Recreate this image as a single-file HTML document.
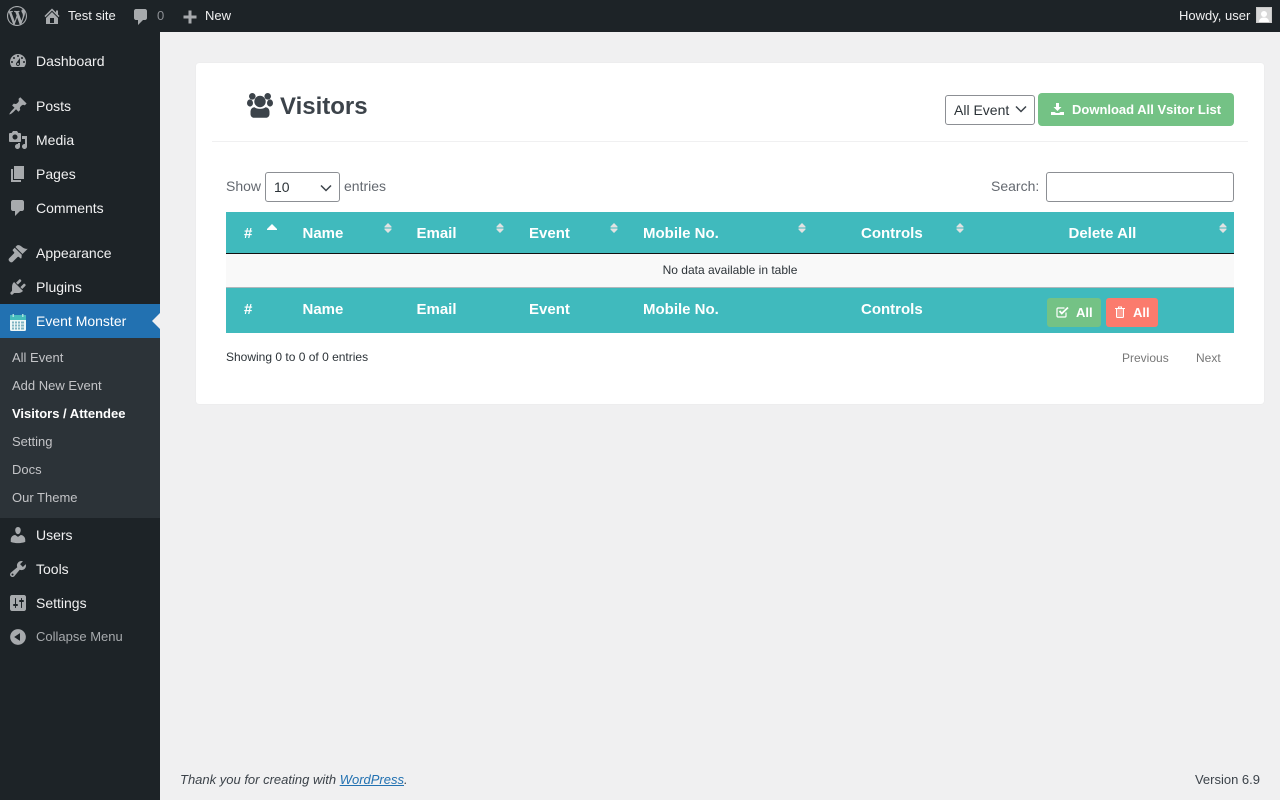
<!DOCTYPE html>
<html lang="en"><head><meta charset="utf-8"><title>Visitors</title>
<style>
html,body{margin:0;padding:0;width:1280px;height:800px;overflow:hidden;background:#f0f0f1;font-family:"Liberation Sans",sans-serif;font-size:13px;color:#3c434a}
div,span,svg,a{position:absolute;white-space:nowrap}
.t{line-height:20px;height:20px}
.m{left:36px;font-size:14px;color:#f0f0f1}
.s{left:12px;font-size:13px;color:#c3c4c7}
.i{width:20px;height:20px;fill:#a7aaad}
.h{font-weight:bold;font-size:15px;color:#fff}
.sort{width:8px;height:10px;fill:#e2e2e2}
.bar{font-size:13px;color:#f0f0f1}
</style></head><body>

<div style="left:0;top:0;width:1280px;height:32px;background:#1d2327"></div>
<div style="left:0;top:32px;width:160px;height:768px;background:#1d2327"></div>

<svg class="i" style="left:7px;top:6px" viewBox="0 0 20 20"><path d="M20 10c0-5.51-4.49-10-10-10C4.48 0 0 4.49 0 10c0 5.52 4.48 10 10 10 5.51 0 10-4.48 10-10zM7.78 15.37L4.37 6.22c.55-.02 1.17-.08 1.17-.08.5-.06.44-1.13-.06-1.11 0 0-1.45.11-2.37.11-.18 0-.37 0-.58-.01C4.12 2.69 6.87 1.11 10 1.11c2.33 0 4.45.87 6.05 2.34-.68-.11-1.65.39-1.65 1.58 0 .74.45 1.36.9 2.1.35.61.55 1.36.55 2.46 0 1.49-1.4 5-1.4 5l-3.03-8.37c.54-.02.82-.17.82-.17.5-.05.44-1.25-.06-1.22 0 0-1.44.12-2.38.12-.87 0-2.33-.12-2.33-.12-.5-.03-.56 1.2-.06 1.22l.92.08 1.26 3.41zM17.41 10c.24-.64.74-1.87.43-4.25.7 1.29 1.05 2.71 1.05 4.25 0 3.29-1.73 6.24-4.4 7.78.97-2.59 1.94-5.2 2.92-7.78zM6.1 18.09C3.12 16.65 1.11 13.53 1.11 10c0-1.3.23-2.48.72-3.59C3.25 10.3 4.67 14.2 6.1 18.09zm4.03-6.63l2.58 6.98c-.86.29-1.76.45-2.71.45-.79 0-1.57-.11-2.29-.33.81-2.38 1.62-4.74 2.42-7.1z"/></svg>
<svg class="i" style="left:42px;top:6px" viewBox="0 0 20 20"><path d="M16 8.5l1.53 1.53-1.06 1.06L10 4.62l-6.47 6.47-1.06-1.06L10 2.5l4 4v-2h2v4zm-6-2.46l6 5.99V18H4v-5.97zM12 17v-5H8v5h4z"/></svg>
<div class="t bar" style="left:68px;top:6px">Test site</div>
<svg class="i" style="left:131px;top:7px" viewBox="0 0 20 20"><path d="M5 2h9c1.1 0 2 .9 2 2v7c0 1.1-.9 2-2 2h-2l-5 5v-5H5c-1.1 0-2-.9-2-2V4c0-1.1.9-2 2-2z"/></svg>
<div class="t" style="left:157px;top:6px;font-size:13px;color:#8c8f94">0</div>
<svg class="i" style="left:179.500px;top:6.500px" viewBox="0 0 20 20"><path d="M16.500 8.500v3h-5v5h-3v-5h-5v-3h5v-5h3v5z"/></svg>
<div class="t bar" style="left:205px;top:6px">New</div>
<div class="t bar" style="left:1179px;top:6px">Howdy, user</div>
<svg style="left:1256px;top:7px;width:16px;height:16px" viewBox="0 0 16 16"><rect width="16" height="16" fill="#c8c8c8"/><rect x="1" y="1" width="14" height="14" fill="#d8d8d8"/><circle cx="8" cy="7" r="3" fill="#fff"/><path d="M3 15c0-3 2.200-4.500 5-4.500s5 1.500 5 4.500z" fill="#fff"/></svg>

<svg class="i" style="left:8px;top:51px" viewBox="0 0 20 20"><path fill-rule="evenodd" d="M3.760 16h12.480c1.100-1.370 1.760-3.110 1.760-5 0-4.420-3.580-8-8-8s-8 3.580-8 8c0 1.890.660 3.630 1.760 5zM10 4c.55 0 1 .45 1 1s-.45 1-1 1-1-.45-1-1 .45-1 1-1zM6 6c.55 0 1 .45 1 1s-.45 1-1 1-1-.45-1-1 .45-1 1-1zm8 0c.55 0 1 .45 1 1s-.45 1-1 1-1-.45-1-1 .45-1 1-1zm-5.370 5.550L12 7v6c0 1.100-.9 2-2 2s-2-.9-2-2c0-.57.24-1.080.63-1.450zM4 10c.55 0 1 .45 1 1s-.45 1-1 1-1-.45-1-1 .45-1 1-1zm12 0c.55 0 1 .45 1 1s-.45 1-1 1-1-.45-1-1 .45-1 1-1zm-5 3c0-.55-.45-1-1-1s-1 .45-1 1 .45 1 1 1 1-.45 1-1z"/></svg>
<div class="t m" style="top:51px">Dashboard</div>

<svg class="i" style="left:8px;top:96px" viewBox="0 0 20 20"><path d="M10.440 3.020l1.820-1.820 6.360 6.350-1.830 1.820c-1.050-.68-2.480-.57-3.410.36l-.75.75c-.92.93-1.040 2.350-.35 3.410l-1.830 1.820-2.410-2.410-2.800 2.790c-.42.42-3.380 2.710-3.800 2.290s1.860-3.390 2.280-3.810l2.790-2.790L4.100 9.360l1.830-1.820c1.050.69 2.480.57 3.400-.36l.75-.75c.93-.92 1.050-2.350.36-3.410z"/></svg>
<div class="t m" style="top:96px">Posts</div>

<svg class="i" style="left:8px;top:130px" viewBox="0 0 20 20"><path fill-rule="evenodd" d="M13 11V4c0-.55-.45-1-1-1h-1.670L9 1H5L3.670 3H2c-.55 0-1 .45-1 1v7c0 .55.45 1 1 1h10c.55 0 1-.45 1-1zM7 4.500c1.380 0 2.500 1.120 2.500 2.500S8.380 9.500 7 9.500 4.500 8.380 4.500 7 5.620 4.500 7 4.500zM14 6h5v10.500c0 1.380-1.120 2.500-2.500 2.500S14 17.880 14 16.500s1.120-2.500 2.500-2.500c.17 0 .34.02.5.05V9h-3V6zm-4 8.050V13h2v3.500c0 1.380-1.120 2.500-2.500 2.500S7 17.880 7 16.500 8.120 14 9.500 14c.17 0 .34.02.5.05z"/></svg>
<div class="t m" style="top:130px">Media</div>

<svg class="i" style="left:8px;top:164px" viewBox="0 0 20 20"><path d="M6 15V2h10v13H6zm-1 1h8v2H3V5h2v11z"/></svg>
<div class="t m" style="top:164px">Pages</div>

<svg class="i" style="left:8px;top:198px" viewBox="0 0 20 20"><path d="M5 2h9c1.100 0 2 .9 2 2v7c0 1.100-.9 2-2 2h-2l-5 5v-5H5c-1.100 0-2-.9-2-2V4c0-1.100.9-2 2-2z"/></svg>
<div class="t m" style="top:198px">Comments</div>

<svg class="i" style="left:8px;top:243px" viewBox="0 0 20 20"><path d="M14.480 11.060L7.410 3.990l1.500-1.500c.5-.56 2.300-.47 3.510.32 1.210.8 1.430 1.280 2.910 2.100 1.180.64 2.450 1.260 4.450.85zm-.71.71L6.700 4.700 4.930 6.470c-.39.39-.39 1.020 0 1.410l1.060 1.060c.39.39.39 1.030 0 1.420L1.200 15.200c-.8.8-.8 2.100 0 2.900l.7.700c.8.8 2.100.8 2.900 0l4.800-4.790c.39-.39 1.030-.39 1.420 0l1.060 1.060c.39.39 1.020.39 1.410 0z"/></svg>
<div class="t m" style="top:243px">Appearance</div>

<svg class="i" style="left:8px;top:277px" viewBox="0 0 20 20"><path d="M13.110 4.360L9.870 7.600 8 5.730l3.240-3.240c.35-.34 1.050-.2 1.560.32.52.51.66 1.210.31 1.550zm-8 1.770l.91-1.120 9.010 9.010-1.190.84c-.71.71-2.630 1.160-3.820 1.160H6.140L4.900 17.260c-.59.59-1.540.59-2.120 0-.59-.58-.59-1.530 0-2.120l1.240-1.240v-3.880c0-1.130.4-3.190 1.090-3.890zm7.260 3.970l3.240-3.240c.34-.35 1.040-.21 1.550.31.52.51.66 1.210.31 1.550l-3.240 3.250z"/></svg>
<div class="t m" style="top:277px">Plugins</div>

<div style="left:0;top:304px;width:160px;height:34px;background:#2271b1"></div>
<svg style="left:152px;top:313px;width:8px;height:16px" viewBox="0 0 8 16"><path d="M8 0v16L0 8z" fill="#f0f0f1"/></svg>
<svg style="left:10px;top:314px;width:16px;height:17px" viewBox="0 0 16 17"><rect x="0" y="1" width="16" height="16" rx="1.500" fill="#eef7f7"/><path d="M0 2.500A1.500 1.500 0 0 1 1.500 1h13A1.500 1.500 0 0 1 16 2.500V6H0z" fill="#45bdbd"/><rect x="2.500" y="0" width="1.500" height="3" fill="#a9e0e0"/><rect x="12" y="0" width="1.500" height="3" fill="#a9e0e0"/><g fill="#7fb3c2"><rect x="2" y="7.500" width="2" height="2"/><rect x="5" y="7.500" width="2" height="2"/><rect x="8" y="7.500" width="2" height="2"/><rect x="11" y="7.500" width="3" height="2"/><rect x="2" y="10.500" width="2" height="2"/><rect x="5" y="10.500" width="2" height="2"/><rect x="8" y="10.500" width="2" height="2"/><rect x="11" y="10.500" width="3" height="2"/><rect x="2" y="13.500" width="2" height="2"/><rect x="5" y="13.500" width="2" height="2"/><rect x="8" y="13.500" width="2" height="2"/><rect x="11" y="13.500" width="3" height="2"/></g></svg>
<div class="t m" style="top:311px;color:#fff">Event Monster</div>

<div style="left:0;top:338px;width:160px;height:180px;background:#2c3338"></div>
<div class="t s" style="top:348px">All Event</div>
<div class="t s" style="top:376px">Add New Event</div>
<div class="t s" style="top:404px;color:#fff;font-weight:bold">Visitors / Attendee</div>
<div class="t s" style="top:432px">Setting</div>
<div class="t s" style="top:460px">Docs</div>
<div class="t s" style="top:488px">Our Theme</div>

<svg class="i" style="left:8px;top:525px" viewBox="0 0 20 20"><path d="M10 9.250c-2.270 0-2.730-3.440-2.730-3.440C7 4.020 7.820 2 9.970 2c2.160 0 2.980 2.020 2.710 3.810 0 0-.41 3.440-2.680 3.440zm0 2.570L12.720 10c2.390 0 4.520 2.330 4.520 4.530v2.490s-3.650 1.130-7.240 1.130c-3.650 0-7.240-1.130-7.240-1.130v-2.490c0-2.250 1.940-4.480 4.470-4.480z"/></svg>
<div class="t m" style="top:525px">Users</div>

<svg class="i" style="left:8px;top:559px" viewBox="0 0 20 20"><path fill-rule="evenodd" d="M16.680 9.770c-1.340 1.340-3.300 1.670-4.950.99l-5.410 6.520c-.99.99-2.590.99-3.580 0s-.99-2.590 0-3.570l6.520-5.420c-.68-1.650-.35-3.610.99-4.950 1.280-1.280 3.120-1.620 4.720-1.060l-2.890 2.890 2.820 2.820 2.860-2.870c.53 1.580.18 3.390-1.080 4.650zM3.810 16.210c.4.39 1.040.39 1.430 0 .4-.4.4-1.040 0-1.430-.39-.4-1.030-.4-1.430 0-.39.39-.39 1.030 0 1.430z"/></svg>
<div class="t m" style="top:559px">Tools</div>

<svg class="i" style="left:8px;top:593px" viewBox="0 0 20 20"><path fill-rule="evenodd" d="M18 16V4c0-1.100-.9-2-2-2H4c-1.100 0-2 .9-2 2v12c0 1.100.9 2 2 2h12c1.100 0 2-.9 2-2zM8 11h1c.55 0 1 .45 1 1s-.45 1-1 1H8v1.500c0 .28-.22.5-.5.5s-.5-.22-.5-.5V13H6c-.55 0-1-.45-1-1s.45-1 1-1h1V5.500c0-.28.22-.5.5-.5s.5.22.5.5V11zm5-2h-1c-.55 0-1-.45-1-1s.45-1 1-1h1V5.500c0-.28.22-.5.5-.5s.5.22.5.5V7h1c.55 0 1 .45 1 1s-.45 1-1 1h-1v5.500c0 .28-.22.5-.5.5s-.5-.22-.5-.5V9z"/></svg>
<div class="t m" style="top:593px">Settings</div>

<svg class="i" style="left:8px;top:627px" viewBox="0 0 20 20"><path fill-rule="evenodd" d="M10 2.160c4.330 0 7.840 3.510 7.840 7.840s-3.510 7.840-7.840 7.840S2.160 14.330 2.160 10 5.710 2.160 10 2.160zm2 11.720V6.120L6.180 9.970z"/></svg>
<div class="t" style="left:36px;top:627px;font-size:13px;color:#a7aaad">Collapse Menu</div>

<div style="left:196px;top:63px;width:1068px;height:341px;background:#fff;border-radius:3px;box-shadow:0 0 1px rgba(0,0,0,.08)"></div>

<svg style="left:247px;top:93px;width:26px;height:25px" viewBox="0 0 26 25" fill="#3c434a"><circle cx="5.300" cy="3.300" r="3.300"/><circle cx="20.700" cy="3.300" r="3.300"/><circle cx="13" cy="8.500" r="5.700"/><ellipse cx="3" cy="10" rx="3" ry="3.600"/><ellipse cx="23" cy="10" rx="3" ry="3.600"/><path d="M3.500 19c0-3.200 2.200-4.700 4-4.700 1.400 1.100 3.400 1.600 5.500 1.600s4.100-.5 5.500-1.600c1.800 0 4 1.500 4 4.700v2c0 2.200-1.500 3.800-3.600 3.800H7.100c-2.100 0-3.600-1.600-3.600-3.800z"/></svg>
<div style="left:280px;top:91px;font-size:24px;line-height:32px;font-weight:bold;color:#3c434a">Visitors</div>

<div style="left:945px;top:95px;width:88px;height:28px;border:1px solid #8c8f94;border-radius:3px;background:#fff"></div>
<div class="t" style="left:954px;top:100px;font-size:14px;color:#2c3338">All Event</div>
<svg style="left:1015px;top:105px;width:12px;height:8px" viewBox="0 0 12 8"><path d="M1 1.500l5 5 5-5" fill="none" stroke="#3c434a" stroke-width="1.500"/></svg>

<div style="left:1038px;top:93px;width:196px;height:33px;background:#74c285;border-radius:4px"></div>
<svg style="left:1051px;top:103px;width:13px;height:12px" viewBox="0 0 13 12" fill="#fff"><path d="M5 0h3v4h2.500L6.500 8 2.500 4H5z"/><path d="M0 9h3.500l1.500 1h3l1.500-1H13v3H0z"/></svg>
<div class="t" style="left:1072px;top:100px;font-size:13px;font-weight:bold;color:#fff">Download All Vsitor List</div>

<div style="left:212px;top:141px;width:1036px;height:1px;background:#f0f0f1"></div>

<div class="t" style="left:226px;top:176px;font-size:14px;color:#646970">Show</div>
<div style="left:265px;top:172px;width:73px;height:28px;border:1px solid #8c8f94;border-radius:3px;background:#fff"></div>
<div class="t" style="left:274px;top:177px;font-size:14px;color:#2c3338">10</div>
<svg style="left:320px;top:184px;width:12px;height:8px" viewBox="0 0 12 8"><path d="M1 1.500l5 5 5-5" fill="none" stroke="#3c434a" stroke-width="1.500"/></svg>
<div class="t" style="left:344px;top:176px;font-size:14px;color:#646970">entries</div>

<div class="t" style="left:991px;top:176px;font-size:14px;color:#646970">Search:</div>
<div style="left:1046px;top:172px;width:186px;height:28px;border:1px solid #8c8f94;border-radius:3px;background:#fff"></div>

<div style="left:226px;top:212px;width:1008px;height:41px;background:#40babd"></div>
<div style="left:226px;top:253px;width:1008px;height:1px;background:#111"></div>
<div style="left:226px;top:254px;width:1008px;height:33px;background:#f9f9f9"></div>
<div style="left:226px;top:287px;width:1008px;height:1px;background:#b0b8bc"></div>
<div style="left:226px;top:288px;width:1008px;height:45px;background:#40babd"></div>

<div class="t h" style="left:244px;top:224px">#</div>
<div class="t h" style="left:302.500px;top:224px">Name</div>
<div class="t h" style="left:416.500px;top:224px">Email</div>
<div class="t h" style="left:529px;top:224px">Event</div>
<div class="t h" style="left:643px;top:224px">Mobile No.</div>
<div class="t h" style="left:861px;top:224px">Controls</div>
<div class="t h" style="left:1068.500px;top:224px">Delete All</div>

<svg style="left:266.500px;top:224px;width:10px;height:6px" viewBox="0 0 10 6"><path d="M5 0L0 5v1h10V5z" fill="#fff"/></svg>
<svg class="sort" style="left:384px;top:223px" viewBox="0 0 8 10"><path d="M4 0L.5 3.500v1h7v-1zM4 10L.5 6.500v-1h7v1z"/></svg>
<svg class="sort" style="left:496px;top:223px" viewBox="0 0 8 10"><path d="M4 0L.5 3.500v1h7v-1zM4 10L.5 6.500v-1h7v1z"/></svg>
<svg class="sort" style="left:610px;top:223px" viewBox="0 0 8 10"><path d="M4 0L.5 3.500v1h7v-1zM4 10L.5 6.500v-1h7v1z"/></svg>
<svg class="sort" style="left:798px;top:223px" viewBox="0 0 8 10"><path d="M4 0L.5 3.500v1h7v-1zM4 10L.5 6.500v-1h7v1z"/></svg>
<svg class="sort" style="left:956px;top:223px" viewBox="0 0 8 10"><path d="M4 0L.5 3.500v1h7v-1zM4 10L.5 6.500v-1h7v1z"/></svg>
<svg class="sort" style="left:1219px;top:223px" viewBox="0 0 8 10"><path d="M4 0L.5 3.500v1h7v-1zM4 10L.5 6.500v-1h7v1z"/></svg>

<div class="t" style="left:226px;top:260px;width:1008px;text-align:center;font-size:12px;color:#2c3338">No data available in table</div>

<div class="t h" style="left:244px;top:300px">#</div>
<div class="t h" style="left:302.500px;top:300px">Name</div>
<div class="t h" style="left:416.500px;top:300px">Email</div>
<div class="t h" style="left:529px;top:300px">Event</div>
<div class="t h" style="left:643px;top:300px">Mobile No.</div>
<div class="t h" style="left:861px;top:300px">Controls</div>

<div style="left:1047px;top:298px;width:54px;height:29px;background:#74c285;border-radius:3px"></div>
<svg style="left:1056px;top:306px;width:13px;height:12px" viewBox="0 0 13 12"><path d="M10 6.500V10a1 1 0 0 1-1 1H2a1 1 0 0 1-1-1V3a1 1 0 0 1 1-1h6.500" fill="none" stroke="#fff" stroke-width="1.200"/><path d="M3.500 5l2.300 2.500L12 1.500" fill="none" stroke="#fff" stroke-width="1.800"/></svg>
<div class="t" style="left:1076px;top:303px;font-size:13px;font-weight:bold;color:#fff">All</div>
<div style="left:1106px;top:298px;width:52px;height:29px;background:#fb7b6d;border-radius:3px"></div>
<svg style="left:1115px;top:306px;width:10px;height:12px" viewBox="0 0 10 12"><path d="M0 2.500h10M3.500 2.500V1h3v1.500" fill="none" stroke="#fff" stroke-width="1"/><rect x="1.500" y="2.500" width="7" height="9" rx="1" fill="#fb9d92" stroke="#fff" stroke-width="1"/></svg>
<div class="t" style="left:1133px;top:303px;font-size:13px;font-weight:bold;color:#fff">All</div>

<div class="t" style="left:226px;top:347px;font-size:12px;color:#2c3338">Showing 0 to 0 of 0 entries</div>
<div class="t" style="left:1122px;top:348px;font-size:12px;color:#777">Previous</div>
<div class="t" style="left:1196px;top:348px;font-size:12px;color:#777">Next</div>

<div class="t" style="left:180px;top:770px;font-size:13px;font-style:italic;color:#3c434a">Thank you for creating with <span style="position:static;color:#2271b1;text-decoration:underline">WordPress</span>.</div>
<div class="t" style="right:20px;top:770px;font-size:13px;color:#3c434a">Version 6.9</div>

</body></html>
